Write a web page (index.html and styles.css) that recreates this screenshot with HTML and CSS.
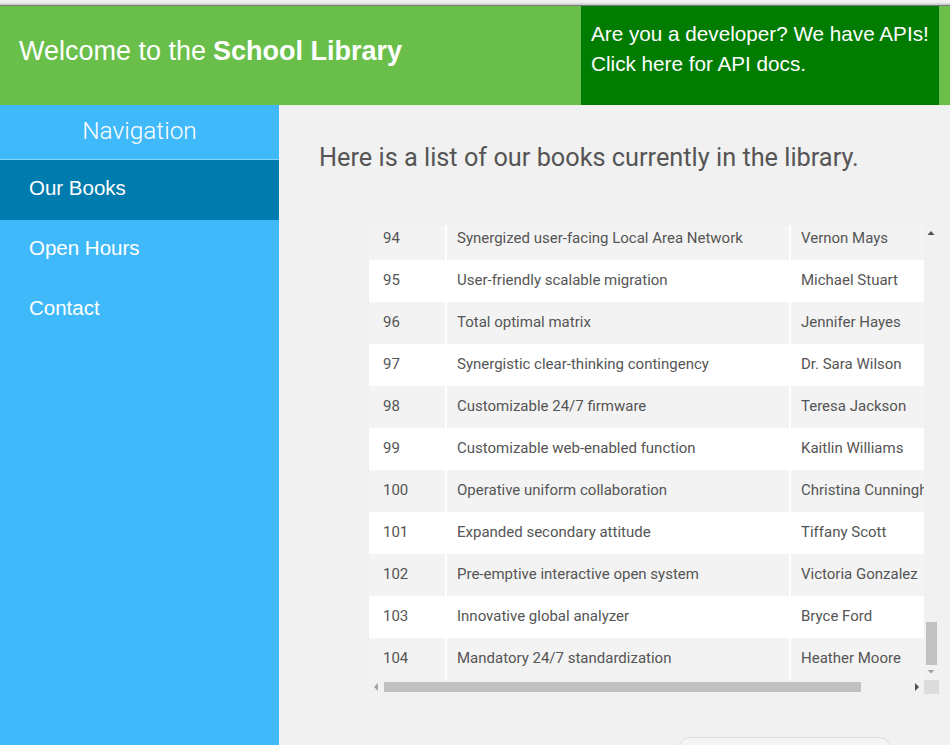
FILE: index.html
```html
<!DOCTYPE html>
<html lang="en">
<head>
<meta charset="utf-8">
<title>School Library</title>
<link rel="stylesheet" href="styles.css">
</head>
<body>
<div class="page">
  <header class="topbar">
    <h1 class="brand">Welcome to the <strong>School Library</strong></h1>
    <a class="devbox" href="#">Are you a developer? We have APIs!<br>Click here for API docs.</a>
  </header>
  <div class="layout">
    <nav class="sidebar">
      <div class="nav-title">Navigation</div>
      <a class="nav-item active" href="#">Our Books</a>
      <a class="nav-item" href="#">Open Hours</a>
      <a class="nav-item" href="#">Contact</a>
    </nav>
    <main class="content">
      <h2 class="intro">Here is a list of our books currently in the library.</h2>
      <div class="table-frame">
        <div class="viewport" id="wrap">
          <table class="books">
            <colgroup><col class="c-id"><col class="c-title"><col class="c-author"></colgroup>
            <tbody id="rows">
              <tr><td>94</td><td>Synergized user-facing Local Area Network</td><td>Vernon Mays</td></tr>
              <tr><td>95</td><td>User-friendly scalable migration</td><td>Michael Stuart</td></tr>
              <tr><td>96</td><td>Total optimal matrix</td><td>Jennifer Hayes</td></tr>
              <tr><td>97</td><td>Synergistic clear-thinking contingency</td><td>Dr. Sara Wilson</td></tr>
              <tr><td>98</td><td>Customizable 24/7 firmware</td><td>Teresa Jackson</td></tr>
              <tr><td>99</td><td>Customizable web-enabled function</td><td>Kaitlin Williams</td></tr>
              <tr><td>100</td><td>Operative uniform collaboration</td><td>Christina Cunningham</td></tr>
              <tr><td>101</td><td>Expanded secondary attitude</td><td>Tiffany Scott</td></tr>
              <tr><td>102</td><td>Pre-emptive interactive open system</td><td>Victoria Gonzalez</td></tr>
              <tr><td>103</td><td>Innovative global analyzer</td><td>Bryce Ford</td></tr>
              <tr><td>104</td><td>Mandatory 24/7 standardization</td><td>Heather Moore</td></tr>
            </tbody>
          </table>
        </div>
        <div class="vscroll">
          <span class="sb-btn"><svg width="15" height="15" viewBox="0 0 15 15"><polygon points="3.5,10 10.5,10 7,6" fill="#505050"/></svg></span>
          <span class="sb-track v"><span class="sb-thumb v"></span></span>
          <span class="sb-btn"><svg width="15" height="15" viewBox="0 0 15 15"><polygon points="3.5,5 10.5,5 7,8.5" fill="#a3a3a3"/></svg></span>
        </div>
        <div class="hscroll">
          <span class="sb-btn h"><svg width="15" height="14" viewBox="0 0 15 14"><polygon points="9,3 9,11 5,7" fill="#a3a3a3"/></svg></span>
          <span class="sb-track h"><span class="sb-thumb h"></span></span>
          <span class="sb-btn h"><svg width="15" height="14" viewBox="0 0 15 14"><polygon points="6,3 6,11 10,7" fill="#505050"/></svg></span>
        </div>
        <div class="sb-corner"></div>
      </div>
      <div class="more-card"></div>
    </main>
  </div>
</div>
<script src="script.js"></script>
</body>
</html>
```

FILE: styles.css
```css
* { box-sizing: border-box; }
html, body { margin: 0; padding: 0; }
body {
  background: #f1f1f1;
  font-family: "Liberation Sans", Arial, sans-serif;
  overflow: hidden;
  height: 745px;
}
.page { padding-top: 5px; }
.topbar {
  display: flex;
  background: #6abf4b;
  height: 100px;
  border-top: 1px solid #7a7a7a;
  box-shadow: 0 -1px 2px rgba(0,0,0,0.25);
  padding-right: 11px;
}
.brand {
  flex: 1;
  margin: 0;
  padding-left: 19px;
  display: flex;
  align-items: center;
  font-size: 27px;
  font-weight: normal;
  color: #fff;
  padding-bottom: 8px;
}
.brand strong { font-weight: bold; margin-left: 7px; }
.devbox {
  width: 358px;
  flex: none;
  background: #007c00;
  color: #fff;
  text-decoration: none;
  font-size: 20.7px;
  line-height: 30px;
  white-space: nowrap;
  overflow: hidden;
  padding: 13px 6px 0 10px;
}
.layout {
  display: flex;
  height: 640px;
}
.sidebar {
  width: 279px;
  flex: none;
  background: #3fb9f9;
  display: flex;
  flex-direction: column;
}
.nav-title {
  height: 55px;
  border-bottom: 1px solid #84d3fb;
  color: #fff;
  font-family: Roboto, "Liberation Sans", sans-serif;
  font-weight: 300;
  font-size: 24.4px;
  text-align: center;
  line-height: 52px;
}
.nav-item {
  display: block;
  height: 60px;
  line-height: 56px;
  padding-left: 29px;
  color: #fff;
  text-decoration: none;
  font-size: 20.5px;
}
.nav-item.active { background: #007bad; }
.content {
  flex: 1;
  min-width: 0;
  padding: 0 11px 0 40px;
  font-family: Roboto, "Liberation Sans", sans-serif;
}
.intro {
  margin: 38px 0 0 0;
  font-size: 25.3px;
  font-weight: normal;
  color: #555;
  line-height: 30px;
  white-space: nowrap;
}
.table-frame {
  margin: 52px 0 0 50px;
  display: grid;
  grid-template-columns: 555px 15px;
  grid-template-rows: 455px 14px;
}
.viewport {
  overflow: hidden;
  background: #fff;
}
.vscroll, .hscroll {
  display: flex;
  background: #f1f1f1;
}
.vscroll { flex-direction: column; }
.sb-btn { display: flex; width: 15px; height: 15px; flex: none; }
.sb-btn.h { height: 14px; }
.sb-btn svg { display: block; }
.sb-track { flex: 1; display: flex; }
.sb-track.v { flex-direction: column; justify-content: flex-end; }
.sb-thumb { background: #c1c1c1; display: block; }
.sb-thumb.v { height: 43px; margin: 0 2px; }
.sb-thumb.h { width: 477px; margin: 2px 0; }
.sb-corner { background: #dcdcdc; }
.books {
  width: 611px;
  border-collapse: collapse;
  table-layout: fixed;
  font-size: 15px;
  color: #555;
}
.c-id { width: 77px; }
.c-title { width: 344px; }
.c-author { width: 190px; }
.books tr { height: 42px; }
.books tr:nth-child(even) { background: #f3f3f3; }
.books tr:nth-child(odd) { background: #fff; }
.books td {
  padding: 0 10px 3px 10px;
  border-right: 2px solid #fff;
  white-space: nowrap;
  overflow: hidden;
  vertical-align: middle;
}
.books td:first-child { padding-left: 14px; }
.books td:last-child { border-right: none; }
.more-card {
  margin: 43px 0 0 360px;
  width: 211px;
  height: 40px;
  background: #f4f4f4;
  border: 1px solid #ddd;
  border-radius: 10px;
}
```

FILE: script.js
```js
(function () {
  var tbody = document.getElementById('rows');
  var first = tbody.firstElementChild;
  for (var i = 1; i <= 93; i++) {
    var tr = document.createElement('tr');
    tr.innerHTML = '<td>' + i + '</td><td></td><td></td>';
    tbody.insertBefore(tr, first);
  }
  var wrap = document.getElementById('wrap');
  wrap.scrollTop = wrap.scrollHeight;
})();
```
